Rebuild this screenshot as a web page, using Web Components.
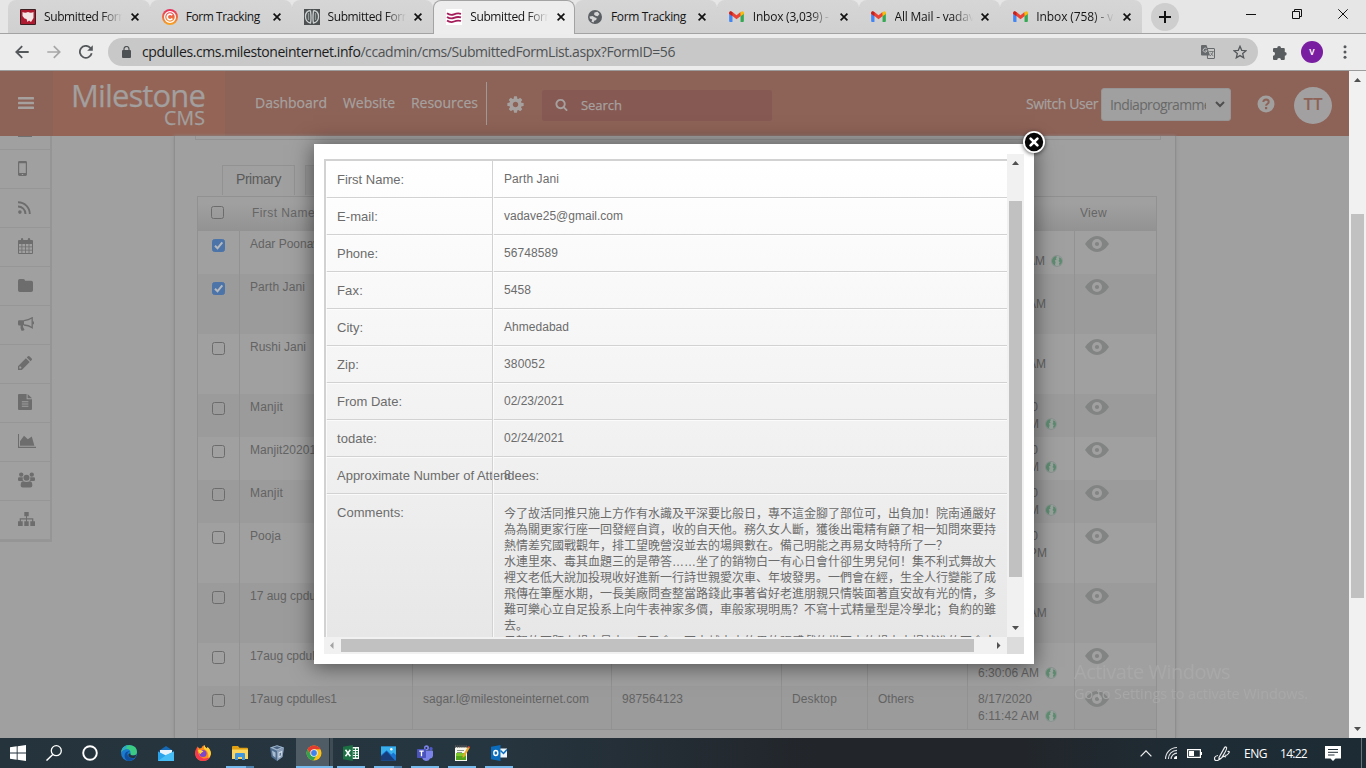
<!DOCTYPE html>
<html lang="en">
<head>
<meta charset="utf-8">
<title>Submitted Form List</title>
<style>
html,body{margin:0;height:100%;overflow:hidden}
body{font-family:"Liberation Sans",sans-serif;background:#a0a0a0}
</style>
</head>
<body>
<app-desktop></app-desktop>
<script>
const UI = '"Open Sans","Noto Sans",sans-serif';
const FA = (d) => `<svg viewBox="0 0 1792 1792" fill="currentColor"><path d="${d}"/></svg>`;
const gmail = '<svg viewBox="0 0 16 12"><path fill="#4285f4" d="M0 2v9q0 1 1 1h2.6V5z"/><path fill="#34a853" d="M16 2v9q0 1-1 1h-2.6V5z"/><path fill="#ea4335" d="M0 1.8 1.6.3 3.6 1.2 8 4.6l4.4-3.4.6 4L8 9 3.6 5.4 0 3z"/><path fill="#fbbc04" d="M12.4 1.2 14.6.2Q16 .5 16 2v1.2l-3.6 2.6z"/><path fill="#c5221f" d="M0 3V1.8Q.2.2 1.8.2L3.6 1.4v4.4z"/></svg>';
const ICONS = {
  cog: FA("M1152 896q0-106-75-181t-181-75-181 75-75 181 75 181 181 75 181-75 75-181zm512-109v222q0 12-8 23t-20 13l-185 28q-19 54-39 91 35 50 107 138 10 12 10 25t-9 23q-27 37-99 108t-94 71q-12 0-26-9l-138-108q-44 23-91 38-16 136-29 186-7 28-36 28h-222q-14 0-24.5-8.5t-11.5-21.5l-28-184q-49-16-90-37l-141 107q-10 9-25 9-14 0-25-11-126-114-165-168-7-10-7-23 0-12 8-23 15-21 51-66.5t54-70.5q-27-50-41-99l-183-27q-13-2-21-12.5t-8-23.5v-222q0-12 8-23t19-13l186-28q14-46 39-92-40-57-107-138-10-12-10-24 0-10 9-23 26-36 98.5-107.5t94.5-71.5q13 0 26 10l138 107q44-23 91-38 16-136 29-186 7-28 36-28h222q14 0 24.5 8.5t11.5 21.5l28 184q49 16 90 37l142-107q9-9 24-9 13 0 25 10 129 119 165 170 7 8 7 22 0 12-8 23-15 21-51 66.5t-54 70.5q26 50 41 98l183 28q13 2 21 12.5t8 23.5z"),
  search: FA("M1216 832q0-185-131.5-316.5t-316.5-131.5-316.5 131.5-131.5 316.5 131.5 316.5 316.5 131.5 316.5-131.5 131.5-316.5zm512 832q0 52-38 90t-90 38q-54 0-90-38l-343-342q-179 124-399 124-143 0-273.5-55.5t-225-150-150-225-55.5-273.5 55.5-273.5 150-225 225-150 273.5-55.5 273.5 55.5 225 150 150 225 55.5 273.5q0 220-124 399l343 343q37 37 37 90z"),
  bars: '<svg viewBox="0 0 16 14" fill="currentColor"><rect y="1" width="16" height="2.600" rx=".6"/><rect y="5.700" width="16" height="2.600" rx=".6"/><rect y="10.400" width="16" height="2.600" rx=".6"/></svg>',
  help: '<svg viewBox="0 0 18 18"><circle cx="9" cy="9" r="8.5" fill="#a2a09f"/><path d="M6.3 7Q6.5 4.4 9.1 4.4q2.7.2 2.6 2.5 0 1.2-1.3 1.9-1.3.6-1.3 1.9" fill="none" stroke="#8d6257" stroke-width="2"/><rect x="8" y="12" width="2.2" height="2.2" fill="#8d6257"/></svg>',
  mobile: '<svg viewBox="0 0 9 15" fill="currentColor"><path fill-rule="evenodd" d="M1.4 0h6.2Q9 0 9 1.4v12.2Q9 15 7.600 15H1.400Q0 15 0 13.600V1.400Q0 0 1.400 0zM1.200 2.200v9.800h6.600V2.200zM3.800 13h1.400v1H3.800z"/></svg>',
  rss: '<svg viewBox="0 0 13 13"><circle cx="1.900" cy="11.100" r="1.800" fill="currentColor"/><path d="M0 5.500A7.500 7.500 0 0 1 7.500 13M0 1.200A11.800 11.800 0 0 1 11.800 13" fill="none" stroke="currentColor" stroke-width="1.900"/></svg>',
  calendar: '<svg viewBox="0 0 15 16"><path fill="currentColor" fill-rule="evenodd" d="M1 2h2V1.200Q3 0 4 0t1.200 1.200V2h4.600V1.200Q10 0 11 0t1.200 1.200V2H14q1 0 1 1v12q0 1-1 1H1q-1 0-1-1V3q0-1 1-1zM1 6v2.400h2.500V6zm3.300 0v2.400H7V6zm3.500 0v2.400h2.800V6zm3.600 0v2.400H14V6zM1 9.200v2.500h2.500V9.200zm3.300 0v2.500H7V9.200zm3.500 0v2.500h2.800V9.200zm3.600 0v2.500H14V9.200zM1 12.500V15h2.500v-2.500zm3.300 0V15H7v-2.500zm3.500 0V15h2.800v-2.500zm3.600 0V15H14v-2.500z"/></svg>',
  folder: '<svg viewBox="0 0 15 13" fill="currentColor"><path d="M1.800 0h3.500Q7 0 7 1.800h6.200Q15 1.800 15 3.600v7.600Q15 13 13.200 13H1.800Q0 13 0 11.200V1.800Q0 0 1.800 0z"/></svg>',
  horn: '<svg viewBox="0 0 16 14"><path fill="currentColor" d="M0 4.500Q0 3.300 1.300 3.300H6v5H5q-.6 1.800 1.500 4.400-.5 1.300-3 1-1.500-2.500-.9-5.300H1.300Q0 8.400 0 7.200z"/><path d="M6 3.700Q10.500 3.200 14.200.8v10Q10.500 8.200 6 8" fill="none" stroke="currentColor" stroke-width="1.300"/><path d="M15.200 4.500v2.800" stroke="currentColor" stroke-width="1.500"/></svg>',
  pencil: '<svg viewBox="0 0 14 14" fill="currentColor"><path fill-rule="evenodd" d="M0 10.200 7.900 2.300l3.800 3.800L3.800 14H0zM1.300 11v1.500h1.600l.7-.8-1.600-1.600zM8.800 1.400 9.900.3q.7-.6 1.500 0l2.300 2.300q.6.700 0 1.500l-1.100 1.100z"/></svg>',
  file: '<svg viewBox="0 0 14 16" fill="currentColor"><path fill-rule="evenodd" d="M1 0h7.600v5.200H14V15q0 1-1 1H1q-1 0-1-1V1q0-1 1-1zm2.800 7.200v1h6.600v-1zm0 2.200v1h6.600v-1zm0 2.300v1h6.600v-1z"/><path d="M9.600 0 14 4.300H9.600z"/></svg>',
  area: '<svg viewBox="0 0 18 14" fill="currentColor"><path d="M0 0h1v12.700h17V14H0zM2 11.800V7.200L6 1.800l3.800 3.400 4-2.600 2.600 9.200z"/></svg>',
  users: '<svg viewBox="0 0 18 16" fill="currentColor"><circle cx="3.400" cy="2.300" r="2.300"/><circle cx="14.600" cy="2.300" r="2.300"/><circle cx="9" cy="5.700" r="3.200"/><path d="M0 8V6.500Q0 4.700 1.500 5h3.600q-.7 3 1 4.100H1.300Q0 9 0 8zm18 0V6.500Q18 4.700 16.500 5h-3.600q.7 3-1 4.100h4.800Q18 9 18 8zM5 16q-2.200 0-2.200-2.100 0-4.600 2.800-4.600Q9 11 12.400 9.300q2.800 0 2.800 4.600Q15.200 16 13 16z"/></svg>',
  sitemap: '<svg viewBox="0 0 17 14" fill="currentColor"><path d="M6.300 0h4.400v4.300H9v2h6.300v3H17V14h-4.700V9.300h1.800V7.400H9v1.900h1.700V14H6.300V9.300H8V7.400H2.900v1.900h1.800V14H0V9.300h1.700v-3H8v-2H6.300z"/></svg>',
  eye: '<svg viewBox="0 0 24 16"><path d="M0 8Q5.500 0 12 0t12 8q-5.500 8-12 8T0 8z" fill="#818482"/><circle cx="12" cy="8" r="5" fill="#a0a0a0"/><circle cx="12" cy="8" r="2.100" fill="#818482"/></svg>',
  globe: '<svg viewBox="0 0 12 12"><circle cx="6" cy="6" r="6" fill="#8a9490"/><circle cx="6" cy="6" r="4.900" fill="#9ba39f"/><path d="M1.200 4.500Q2 1.800 5 1L6 2 4.800 3.200l.8 1.200L3.800 5.600l.8 1.600L4 9.500l.6 1.300Q1.300 9.500 1 6.500z" fill="#5f8b71"/><path d="M7.800 2.200 10 3.200Q11.300 5 11 7q-.6 2.200-2.400 3.300L8 8.500l.8-1.200-1.300-1.200.8-1.700z" fill="#5f8b71"/></svg>',
  back: '<svg viewBox="0 0 14 14"><path d="M13.700 7H1.500M7.200 1.200 1.300 7l5.900 5.800" fill="none" stroke="#55585b" stroke-width="1.800"/></svg>',
  fwd: '<svg viewBox="0 0 14 14"><path d="M.3 7h12.200M6.800 1.200 12.700 7l-5.900 5.800" fill="none" stroke="#a6a6a6" stroke-width="1.700"/></svg>',
  reload: '<svg viewBox="0 0 14 14"><path d="M12.700 8.300A6 6 0 1 1 11.300 2.800L12.600 4" fill="none" stroke="#55585b" stroke-width="1.800"/><path d="M13.800.2v5.600H8.200z" fill="#55585b"/></svg>',
  lock: '<svg viewBox="0 0 9 12"><rect y="4" width="9" height="8" rx="1" fill="#4e5154"/><path d="M2 4.500V3a2.500 2.500 0 0 1 5 0v1.500" fill="none" stroke="#4e5154" stroke-width="1.200"/></svg>',
  translate: '<svg viewBox="0 0 14 14"><path d="M6 3.500h7q.5 0 .5.500v9q0 .5-.5.500H6.500z" fill="none" stroke="#66696b"/><path d="M0 1q0-1 1-1h4.500L9 10.500H1q-1 0-1-1z" fill="#66696b"/><path d="M5.700 3.800a2 2 0 1 0 .4 2H4.300" fill="none" stroke="#c8c8c8" stroke-width=".9"/><path d="M8.200 6.500h4.500M12 6.700q-.8 3-3 4.300m.7-3.200 2.500 3.300" fill="none" stroke="#66696b" stroke-width=".8"/></svg>',
  star: '<svg viewBox="0 0 14 14"><path d="m7 1.300 1.700 4 4.300.4-3.300 2.900 1 4.200L7 10.600l-3.700 2.200 1-4.200L1 5.700l4.300-.4z" fill="none" stroke="#55585b" stroke-width="1.300"/></svg>',
  puzzle: '<svg viewBox="0 0 15 15" fill="#5a5d60"><path d="M2.200 3h3a1.900 1.900 0 1 1 3.800 0h2.800q1 0 1 1v2.900a1.900 1.900 0 1 1 0 3.800V14q0 1-1 1H9a1.900 1.900 0 0 0-3.800 0H2Q1 15 1 14v-3.200a2 2 0 0 0 0-4V4q0-1 1.200-1z"/></svg>',
  dots: '<svg viewBox="0 0 4 14" fill="#55585b"><circle cx="2" cy="1.800" r="1.500"/><circle cx="2" cy="7" r="1.500"/><circle cx="2" cy="12.200" r="1.500"/></svg>',
  close: '<svg viewBox="0 0 8 8"><path d="m.6.600 6.800 6.800M7.400.6.600 7.400" stroke="#111" stroke-width="1.700"/></svg>',
  plus: '<svg viewBox="0 0 12 12"><path d="M6 0v12M0 6h12" stroke="#111" stroke-width="2"/></svg>',
  min: '<svg viewBox="0 0 10 10"><path d="M0 5.500h10" stroke="#111"/></svg>',
  max: '<svg viewBox="0 0 10 10"><path d="M.5 2.500h7v7h-7zM2.500 2.500v-2h7v7h-2" fill="none" stroke="#111"/></svg>',
  x: '<svg viewBox="0 0 10 10"><path d="m.3.300 9.400 9.400M9.700.3.300 9.700" stroke="#111"/></svg>',
  fav1: '<svg viewBox="0 0 16 16"><rect width="16" height="16" rx="1" fill="#3c2022"/><rect x="1" y="1" width="14" height="14" fill="#b01a31"/><path d="M2.500 3q2.500 1.500 5.500 0 3 1.500 5.500 0v6L11 13l-2-1.500L7.500 13 6.500 10 4.500 9.500 2.500 7z" fill="#f4e6e6"/></svg>',
  fav2: '<svg viewBox="0 0 16 16"><defs><linearGradient id="g" x2="0" y2="1"><stop stop-color="#e62c5e"/><stop offset="1" stop-color="#f7a823"/></linearGradient></defs><circle cx="8" cy="8" r="8" fill="url(#g)"/><circle cx="8" cy="8" r="5.400" fill="none" stroke="#fff" stroke-width="1.300"/><path d="M10.200 6.200A2.800 2.800 0 1 0 10.300 9.600" fill="none" stroke="#fff" stroke-width="1.700"/></svg>',
  fav3: '<svg viewBox="0 0 16 16"><rect width="16" height="16" fill="#4c5050"/><g fill="none" stroke="#cdd0d0" stroke-width="1.300"><path d="M6.500 1.500Q1.500 2 1.500 7.500T6.500 14Q7.500 10 6.500 1.500M9.500 1.500q5 .5 5 6t-5 6.500q-1-4 0-12.500"/><path d="M4.500 4v7M11.500 4v7" stroke="#92999a"/></g></svg>',
  fav4: '<svg viewBox="0 0 16 16"><rect width="16" height="16" fill="#fff"/><path d="M1 4.300q3.500 2.500 7 1t7-.5M1 7.900q3.500 2.500 7 1t7-.5M1 11.500q3.500 2.500 7 1t7-.5" fill="none" stroke="#a51d5b" stroke-width="1.800"/></svg>',
  fav5: '<svg viewBox="0 0 14 14"><circle cx="7" cy="7" r="7" fill="#5b5f63"/><path d="M1.500 6.500 4.500 6 7 7.600 8.700 8l-.5 2-2 .7-.6 1.800-2.100-.8.700-2.200-2.300-1zM6.500 2.500 9.500 1.800 11.500 4 9.700 6.200 7.500 5.800 6 4.500z" fill="#d4d4d4"/></svg>',
  gmail,
  win: '<svg viewBox="0 0 16 16" fill="#fff"><path d="M0 2.300 6.700 1.300v6.300H0zM7.600 1.200 16 0v7.600H7.600zM0 8.500h6.700v6.300L0 13.800zM7.600 8.500H16V16l-8.400-1.200z"/></svg>',
  tsearch: '<svg viewBox="0 0 16 16"><circle cx="10.300" cy="5.700" r="5" fill="none" stroke="#fff" stroke-width="1.300"/><path d="M6.800 9.400.5 15.600" stroke="#fff" stroke-width="1.400"/></svg>',
  cortana: '<svg viewBox="0 0 16 16"><circle cx="8" cy="8" r="6.800" fill="none" stroke="#fff" stroke-width="1.900"/></svg>',
  edge: '<svg viewBox="0 0 16 16"><circle cx="8" cy="8" r="8" fill="#1b7ccf"/><path d="M0 7.500Q1 0 8.300 0 16 .5 16 7q-.3 3.500-4 3.500-3.500-.3-2.500-2Q10 4.300 6 4 2 4 0 7.500z" fill="#3ccb82"/><path d="M0 7.500Q2 3.200 6.500 3.300 3 1.800 8.300 0 1 .5 0 7.500z" fill="#2ba6d9"/><path d="M9 6.500q-4.200 1-1.800 4.800 2.200 3 6.600 1.400Q11 16.500 7 15.900 2.700 14 3.800 9 5 5.500 9 6.500z" fill="#0f4f9e"/><path d="M9.500 8.500q-.8 1.900 2.500 2 2 0 3.300-1-.3 2-1.500 3.200-4 .8-6-1.300Q6.500 8 9.500 8.500z" fill="#25323b"/></svg>',
  mail: '<svg viewBox="0 0 16 15"><path d="M0 5.500 8 0l8 5.500z" fill="#1568b3"/><path d="M2 4h12v6H2z" fill="#e9f3fb"/><path d="M0 5.500 8 9.500l8-4V15H0z" fill="#2aa3ea"/><path d="m0 15 9-6.500 7-3V15z" fill="#47bdf5"/></svg>',
  firefox: '<svg viewBox="0 0 16 16"><path d="M8 16q-7-.3-7.800-7Q.2 5.500 2 3.500L2.400 1.500 4.400 3.400l2-.3Q7 1 9.500 0q0 2 2.500 3.500l.5-1.500Q16 5 15.900 9 15 16 8 16z" fill="#ff8a1e"/><path d="M2.400 1.500Q0 4.500.2 9 1 16 8 16q5 0 7.200-4.500-4 3-8 1.500Q2 10.500 2.400 1.500z" fill="#f5384f"/><circle cx="8" cy="8.500" r="3.600" fill="#7e46c9"/><path d="M3 5q3-.8 5.500 1.500Q6.500 7 5.500 9 3.500 8 3 5zM9.500 0q.2 2 2.500 3.500L12.500 2Q16 5 15.900 9q-.8 3-2.500 4Q14 6 9 4q-.5-2 .5-4z" fill="#ffd23c"/></svg>',
  explorer: '<svg viewBox="0 0 16 14"><path d="M0 1q0-1 1-1h5l1.500 1.700H15q1 0 1 1V13H0z" fill="#e0a012"/><path d="M0 3.500h16V13H0z" fill="#fcd65f"/><path d="M3 13V8q0-1 1-1h8q1 0 1 1v6h-3v-3H6v3H3z" fill="#3f97df"/></svg>',
  vbox: '<svg viewBox="0 0 16 16"><path d="m1 2.500 7-2.300 7 2.300L13.500 12 8 16l-5.500-4z" fill="#4e6c8e"/><path d="m1 2.500 7-2.300 7 2.300-7 3.300z" fill="#9db4cb"/><path d="M8 5.800 15 2.500 13.500 12 8 16z" fill="#8ba0b8"/><path d="m4 2.500 4-1.200 4 1.200-4 1.700z" fill="#4a6381"/><path d="m9.500 7.500 3.700-1.800-.7 5.200-3 2.200z" fill="#d5e2ee"/><path d="m10.500 8.300 1.700-.8-.4 2.900-1.300.9z" fill="#5b7592"/><path d="m3 5.500 3.500 2v5.200L3.900 10.800z" fill="#a9bdd1"/></svg>',
  chrome: '<svg viewBox="0 0 16 16"><circle cx="8" cy="8" r="7.500" fill="#fbc116"/><path d="M1.500 4.300A7.500 7.500 0 0 1 14.500 4.300H8L5 10z" fill="#e33b2e"/><path d="M1.500 4.300A7.500 7.500 0 0 0 7.300 15.500L10.800 10 5 10z" fill="#31a350"/><circle cx="8" cy="8" r="3.700" fill="#f4f4f4"/><circle cx="8" cy="8" r="2.900" fill="#3e82ee"/></svg>',
  excel: '<svg viewBox="0 0 16 16"><path d="M8 2h8v12H8z" fill="#f6faf7"/><path d="M10 4.200h2m1 0h2m-5 2.500h2m1 0h2m-5 2.500h2m1 0h2m-5 2.500h2m1 0h2" stroke="#1d7044" stroke-width="1.400"/><path d="m0 1.800 9.800-1.800v16L0 14.200z" fill="#1d7044"/><path d="m2.500 4.700 4.800 6.600M7.300 4.700 2.500 11.300" stroke="#fff" stroke-width="1.500"/></svg>',
  photos: '<svg viewBox="0 0 16 15"><rect width="16" height="15" fill="#1b75d0"/><path d="M0 0h16v9l-3-2.500-2 2L6 4 0 9z" fill="#39b0ee"/><path d="m0 15 0-4.500L6 5l9 10z" fill="#173d7a"/><circle cx="11" cy="3" r="1.300" fill="#fff"/></svg>',
  teams: '<svg viewBox="0 0 16 16"><circle cx="9.500" cy="2.700" r="2.500" fill="#7b83eb"/><circle cx="9.300" cy="2.900" r="1" fill="#25303a"/><circle cx="14" cy="3.700" r="1.700" fill="#5059c9"/><path d="M6 5.500h9q1 0 1 1V11q-.5 2.500-3 2.500-1 2.500-4 2.500-3.500-.5-4-4z" fill="#7b83eb"/><rect y="4" width="9" height="9" rx=".8" fill="#4b53bc"/><path d="M2.300 6.200h4.400M4.500 6.200v5" stroke="#fff" stroke-width="1.300"/></svg>',
  npp: '<svg viewBox="0 0 16 16"><path d="M1 2h12v14H1z" fill="#f5f6ee"/><path d="M2 8h10v7H2z" fill="#7ec72b"/><path d="M2 11h10v4H2z" fill="#50a51a"/><path d="M1 1.500h12" stroke="#555" stroke-width="2.500" stroke-dasharray="1.300 .8"/><path d="M3 5.500h7M3 7.500h5" stroke="#8b9287"/><path d="m14 1.500 2 1-5.500 9-2 1.500.3-2.500z" fill="#eaa72c"/><path d="m14.300 1 1.700.8-.6 1.300-1.800-.9z" fill="#ce3b2e"/></svg>',
  outlook: '<svg viewBox="0 0 16 16"><rect x="8" y="3.500" width="8" height="9" fill="#eef6fc"/><path d="m9.500 5.500 3 3L16 4.500" fill="none" stroke="#0b6cbd" stroke-width="1.500"/><path d="m0 1.800 9.500-1.800v16L0 14.200z" fill="#0b6cbd"/><ellipse cx="4.800" cy="8" rx="2" ry="2.500" fill="none" stroke="#fff" stroke-width="1.400"/></svg>',
  chev: '<svg viewBox="0 0 12 7"><path d="m.6 6.400 5.400-5.500 5.400 5.500" fill="none" stroke="#eee" stroke-width="1.300"/></svg>',
  wifi: '<svg viewBox="0 0 13 13"><g fill="none" stroke="#dfe2e4" stroke-width="1.200"><path d="M.6 13A12.400 12.400 0 0 1 13 .6M3.600 13A9.400 9.400 0 0 1 13 3.600M6.600 13A6.400 6.400 0 0 1 13 6.600"/></g><path d="M9.700 13A3.300 3.300 0 0 1 13 9.700V13z" fill="#fff"/></svg>',
  battery: '<svg viewBox="0 0 15 9"><path d="M.6.600h12.800v7.800H.6z" fill="none" stroke="#fff" stroke-width="1.200"/><path d="M2 2h5v5H2zM14 3h1v3h-1z" fill="#fff"/></svg>',
  pen: '<svg viewBox="0 0 16 15"><path d="M4 9.500q-3.500.5-3.500 3t3 2q3-1 4.500-3t4-.5M5 11.500 10.500 1.600q1-1.500 2 0t-5 10.400l-2.500 1zM13.500 5.500q3-.5 1 2T11 9" fill="none" stroke="#eee" stroke-width="1.200"/></svg>',
  note: '<svg viewBox="0 0 16 15"><path d="M0 0h16v12.500h-5.500L8 15l-2.500-2.500H0z" fill="#fff"/><path d="M3 3.500h10M3 6.300h10M3 9h6.500" stroke="#222e36" stroke-width="1"/></svg>',
  modalclose: '<svg viewBox="0 0 24 24"><circle cx="12" cy="12" r="11" fill="#fff"/><circle cx="12" cy="12" r="9.200" fill="#060606"/><path d="m8.600 8.600 6.800 6.800m0-6.800-6.800 6.800" stroke="#fff" stroke-width="2.700" stroke-linecap="round"/></svg>'
};
const define = (name, html, setup) => customElements.define(name, class extends HTMLElement {
  connectedCallback() {
    if (this.shadowRoot) return;
    this.attachShadow({ mode: 'open' }).innerHTML = typeof html === 'function' ? html(this) : html;
    if (setup) setup(this);
  }
});
const ic = (n, w, h = w, extra = '') => `<ui-icon name="${n}" w="${w}" h="${h}" ${extra}></ui-icon>`;

define('ui-icon', (e) => `<style>:host{display:block;flex:none;width:${e.getAttribute('w')}px;height:${e.getAttribute('h')}px}svg{display:block;width:100%;height:100%}</style>${ICONS[e.getAttribute('name')]}`);

/* Scroll bar: pad = distance from track start to thumb, len = thumb length */
define('scroll-bar', (e) => {
  const h = e.hasAttribute('horizontal'), pad = e.getAttribute('pad'), len = e.getAttribute('len');
  const arr = (d) => `<svg width="17" height="17" viewBox="0 0 17 17"><path d="${d}" fill="${e.hasAttribute('start') && d[1] === '9' ? '#a3a3a3' : '#505050'}"/></svg>`;
  return `<style>:host{display:flex;flex-direction:${h ? 'row' : 'column'};background:#f1f1f1;flex:none;${h ? 'height:17px' : 'width:17px'}}
  svg{display:block;flex:none}.t{background:#c1c1c1;flex:none;${h ? `width:${len}px;margin:2px 0 2px ${pad}px` : `height:${len}px;margin:${pad}px 2px 0`}}.s{flex:1}</style>
  ${arr(h ? 'M9.500 5v7L6 8.500z' : 'M5 11h7L8.500 7z')}<div class="t"></div><div class="s"></div>${arr(h ? 'M7 5v7l3.500-3.500z' : 'M5 6h7l-3.500 4z')}`;
});

define('browser-tab', (e) => {
  const a = e.hasAttribute('active'), n = e.getAttribute('icon');
  return `<style>:host{display:flex;align-items:center;box-sizing:border-box;width:141.750px;height:34px;padding:0 11px 0 12px;font:12px ${UI};color:#151515;
  background:${a ? '#ededed' : 'linear-gradient(#d6d6d6,#d0d0d0)'};border:solid #a3a3a3;border-width:${a ? '1px 1px 0' : '0 0 1px'};border-radius:8px 8px 0 0;${a ? 'padding:0 9px 2px 12px;' : ''}position:relative}
  .i{width:16px;display:flex;justify-content:center}.t{margin-left:8px;width:79px;overflow:hidden;white-space:nowrap;${e.hasAttribute('fade') ? '-webkit-mask-image:linear-gradient(90deg,#000 72%,transparent 99%);' : ''}}
  .x{margin-left:auto}:host([sep])::after{content:"";position:absolute;right:-1px;top:7px;width:1px;height:20px;background:#7c7c7c}</style>
  <div class="i">${n === 'gmail' ? ic(n, 15, 11) : n === 'fav5' ? ic(n, 14) : ic(n, 16)}</div><div class="t"><slot></slot></div><div class="x">${ic('close', 8)}</div>`;
});

define('browser-chrome', `<style>
:host{display:block;height:71px;background:#e6e6e6;flex:none}
.tabs{display:flex;height:34px;padding-left:8px;box-sizing:border-box;background:linear-gradient(#a3a3a3,#a3a3a3) 0 33px/100% 1px no-repeat #e6e6e6}
.new{width:28px;height:28px;border-radius:50%;background:#cecece;margin:3px 0 0 9px;display:grid;place-items:center}
.win{margin-left:auto;display:flex;gap:36px;padding:9px 18px 0 0}
.bar{height:37px;display:flex;align-items:center;background:#ececec;border-bottom:1px solid #9c9c9c;box-sizing:border-box}
.nav{display:flex;gap:18px;padding-left:15px;width:93px}
.url{width:1150px;height:28px;border-radius:14px;background:#c8c8c8;display:flex;align-items:center;padding:0 11px 0 14px;box-sizing:border-box;font:14px ${UI};color:#4f5254}
.url fit-text{margin:-1px 0 0 11px}.url b{font-weight:400;color:#1b1c1d}
.r{margin-left:auto;display:flex;gap:18px}
.pr{width:22px;height:22px;border-radius:50%;background:#7a1ea1;color:#fff;font:600 10px/21px ${UI};text-align:center;margin:0 20px 0 14px}
</style>
<div class="tabs">
<browser-tab icon="fav1" fade sep><fit-text w="85">Submitted Form</fit-text></browser-tab>
<browser-tab icon="fav2" sep><fit-text w="74">Form Tracking</fit-text></browser-tab>
<browser-tab icon="fav3" fade><fit-text w="85">Submitted Form</fit-text></browser-tab>
<browser-tab icon="fav4" fade active><fit-text w="85">Submitted Form</fit-text></browser-tab>
<browser-tab icon="fav5" sep><fit-text w="75">Form Tracking</fit-text></browser-tab>
<browser-tab icon="gmail" fade sep><fit-text w="76">Inbox (3,039) -</fit-text></browser-tab>
<browser-tab icon="gmail" fade sep><fit-text w="80">All Mail - vadav</fit-text></browser-tab>
<browser-tab icon="gmail" fade><fit-text w="77">Inbox (758) - v</fit-text></browser-tab>
<div class="new">${ic('plus', 12)}</div>
<div class="win">${ic('min', 10)}${ic('max', 10)}${ic('x', 10)}</div></div>
<div class="bar"><div class="nav">${ic('back', 14)}${ic('fwd', 14)}${ic('reload', 14)}</div>
<div class="url">${ic('lock', 9, 12)}<fit-text w="533"><b>cpdulles.cms.milestoneinternet.info</b>/ccadmin/cms/SubmittedFormList.aspx?FormID=56</fit-text><div class="r">${ic('translate', 14)}${ic('star', 14)}</div></div>
<div style="margin-left:14px">${ic('puzzle', 15)}</div><div class="pr">v</div>${ic('dots', 4, 14)}</div>`);

define('cms-header', `<style>
:host{display:flex;height:65px;flex:none;background:#8d6257;color:#a6a19f;font-family:${UI};-webkit-text-stroke:.25px}
.menu{width:53px;box-sizing:border-box;padding:25px 0 0 18px;color:#a6a19f}
.logo{width:172px;background:#946557;box-sizing:border-box;padding:9px 20px 0 18px;color:#a29f9e}
.a{font-size:31px;line-height:30px;white-space:nowrap}.b{font-size:19.500px;line-height:15px;text-align:right}
nav{display:flex;gap:16px;padding:0 8px 0 30px;height:43px;margin-top:11px;border-right:1px solid #a09a97;font-size:14px;line-height:42px}
.cog{margin:24px 0 0 19px}
.search{width:230px;height:31px;margin:19px 0 0 17px;border-radius:3px;background:#865953;display:flex;align-items:center;font-size:13px;box-sizing:border-box;padding:0 0 2px 13px;gap:13px}
.sw{margin:23px 3px 0 auto;font-size:14px;line-height:20px}
.sel{width:130px;height:33px;margin-top:17px;box-sizing:border-box;border:1px solid #979595;border-radius:3px;background:#a0a0a0;color:#696969;font-size:14px;line-height:31px;padding:0 5px 0 8px;display:flex;align-items:center;justify-content:space-between;-webkit-text-stroke:0}
.sel div{width:96px;overflow:hidden}
.q{margin:24px 0 0 26px}.tt{width:38px;height:37px;border-radius:50%;background:#a2a0a0;color:#8d6257;margin:16px 17px 0 19px;text-align:center;font:600 17px/34px ${UI};-webkit-text-stroke:0}
</style>
<div class="menu">${ic('bars', 16, 14)}</div>
<div class="logo"><div class="a"><fit-text w="134">Milestone</fit-text></div><div class="b"><fit-text w="41">CMS</fit-text></div></div>
<nav><fit-text w="72">Dashboard</fit-text><fit-text w="52">Website</fit-text><fit-text w="67">Resources</fit-text></nav>
<div class="cog">${ic('cog', 19)}</div>
<div class="search">${ic('search', 13)}<fit-text w="41">Search</fit-text></div>
<div class="sw"><fit-text w="72">Switch User</fit-text></div>
<div class="sel"><div><fit-text w="101">Indiaprogramme</fit-text></div><svg width="10" height="7" viewBox="0 0 10 7"><path d="m1 1 4 4 4-4" fill="none" stroke="#4e4e4e" stroke-width="2"/></svg></div>
<div class="q">${ic('help', 18)}</div><div class="tt">TT</div>`);

define('side-nav', `<style>
:host{display:block;width:52px;height:406px;flex:none;border:solid #959595;border-width:0 2px 2px 0;color:#6d6d6d;box-sizing:border-box}
div{height:39px;box-sizing:border-box;border-bottom:1px solid #969696;display:flex;align-items:center;padding:0 0 2px 18px}
.f{height:14px;align-items:flex-start}.f i{width:14px;height:1px;background:#707070}
</style><div class="f"><i></i></div>
<div>${ic('mobile', 9, 15)}</div><div>${ic('rss', 13)}</div><div>${ic('calendar', 15, 16)}</div><div>${ic('folder', 15, 13)}</div><div>${ic('horn', 16, 14)}</div><div>${ic('pencil', 14)}</div><div>${ic('file', 14, 16)}</div><div>${ic('area', 18, 14)}</div><div>${ic('users', 17, 16)}</div><div>${ic('sitemap', 17, 14)}</div>`);

define('check-box', (e) => `<style>:host{display:block;box-sizing:border-box;width:13px;height:13px;border:1.400px solid #6c6c6c;border-radius:2.500px}
:host([checked]){background:#4c74a8;border-color:#4c74a8}svg{display:block;margin:-1px}</style>${e.hasAttribute('checked') ? '<svg width="13" height="13" viewBox="0 0 13 13"><path d="m3 6.800 2.500 2.500L10.300 3.400" fill="none" stroke="#b5b9be" stroke-width="2"/></svg>' : ''}`);

define('form-row', (e) => {
  const g = (n) => e.getAttribute(n) || '';
  const cell = (n, w) => `<span>${g(n) ? `<fit-text w="${w}">${g(n)}</fit-text>` : ''}</span>`;
  return `<style>:host{display:grid;grid-template-columns:41px 173px 199px 170px 86px 100px 107px 82px;height:${g('h')}px;font-size:12px;line-height:17px;color:#636363}
  :host([alt]){background:#9b9b9b}
  span{border-left:1px solid #929292;padding:5px 0 0 10px;white-space:nowrap;overflow:hidden}span.c{border-left:0;padding:8px 0 0 14px}
  .d{display:flex;align-items:center;gap:6px}.d ui-icon{margin-top:-1px}span.v{padding:5px 0 0 10px}</style>
  <span class="c"><check-box ${e.hasAttribute('checked') ? 'checked' : ''}></check-box></span>${cell('name', g('nw'))}${cell('mail', 166)}${cell('phone', 61)}${cell('device', 45)}${cell('kind', 36)}
  <span><div><fit-text w="${g('dw')}">${g('date')}</fit-text></div><div class="d"><fit-text w="${g('tw')}">${g('time')}</fit-text>${e.hasAttribute('globe') ? ic('globe', 12) : ''}</div></span><span class="v">${ic('eye', 24, 16)}</span>`;
});

define('form-table', `<style>
:host{display:block;box-sizing:border-box;width:960px;height:602px;border:1px solid #919191;border-bottom:0;margin-left:22px}
.h{height:34px;box-sizing:border-box;background:linear-gradient(#a0a0a0 20%,#929292);display:grid;grid-template-columns:54px 828px 1fr;font-size:12px;line-height:32px;color:#666}
.h check-box{margin:9px 0 0 13px}.e{border-top:1px solid #919191}</style>
<div class="h"><check-box></check-box><fit-text w="63">First Name</fit-text><fit-text w="27">View</fit-text></div>
<form-row h="43" checked name="Adar Poonawala" nw="88" date="2/23/2021" dw="52" time="10:30:06 AM" tw="67" globe></form-row>
<form-row h="60" alt checked name="Parth Jani" nw="55" date="2/23/2021" dw="52" time="10:28:46 AM" tw="68"></form-row>
<form-row h="60" name="Rushi Jani" nw="56" date="2/22/2021" dw="52" time="10:12:31 AM" tw="68"></form-row>
<form-row h="43" alt name="Manjit" nw="33" date="12/10/2020" dw="60" time="6:48:12 AM" tw="61" globe></form-row>
<form-row h="43" name="Manjit202012" nw="73" date="12/10/2020" dw="60" time="6:40:05 AM" tw="61" globe></form-row>
<form-row h="43" alt name="Manjit" nw="33" date="12/10/2020" dw="60" time="6:35:20 AM" tw="61" globe></form-row>
<form-row h="60" name="Pooja" nw="31" date="11/20/2020" dw="60" time="12:10:33 PM" tw="69"></form-row>
<form-row h="60" alt name="17 aug cpdulles" nw="84" date="8/17/2020" dw="54" time="10:31:40 AM" tw="69"></form-row>
<form-row h="43" name="17aug cpdulles" nw="80" date="8/17/2020" dw="54" time="6:30:06 AM" tw="61" globe></form-row>
<form-row h="43" alt name="17aug cpdulles1" nw="87" mail="sagar.l@milestoneinternet.com" phone="987564123" device="Desktop" kind="Others" date="8/17/2020" dw="54" time="6:11:42 AM" tw="61" globe></form-row>
<div class="e"></div>`);

define('cms-page', `<style>
:host{display:flex;flex-direction:column;width:1349px;height:667px;background:#a0a0a0;overflow:hidden}
.main{display:flex;flex:1;min-height:0}
.panel{margin-left:122px;width:1002px;box-sizing:border-box;border:solid #8e8e8e;border-width:0 1px;height:602px;box-shadow:0 0 3px #8d8d8d}
.box{height:4px;box-sizing:border-box;width:966px;margin-left:20px;border:solid #929292;border-width:0 1px 1px}
.tabs{display:flex;gap:10px;padding:25px 0 0 47px;height:31px;font-size:14px;line-height:27px;color:#5a5a5a}
.tabs div{box-sizing:border-box;width:73px;height:30px;border:1px solid #929292;border-bottom:0;padding-left:13px}.tabs div+div{background:#9a9a9a;width:100px}
</style>
<cms-header></cms-header>
<div class="main"><side-nav></side-nav><div class="panel"><div class="box"></div><div class="tabs"><div><fit-text w="45">Primary</fit-text></div><div></div></div><form-table></form-table></div></div>`);

define('detail-row', `<style>:host{display:grid;grid-template-columns:166px 1fr;height:36px;border-bottom:1px solid #d2d2d2;line-height:36px;color:#6c6c6c;white-space:nowrap;flex:none}
div{box-sizing:border-box;box-shadow:inset 1px 1px #ffffffb0}.l{font-size:13px;padding-left:11px;line-height:37px}.v{font-size:12px;border-left:1px solid #d2d2d2;padding-left:11px}
:host([long]){height:200px}:host([long]) .v{line-height:16px;padding-top:12px;font-family:"Liberation Sans","Noto Sans CJK SC",sans-serif}</style>
<div class="l"><slot name="label"></slot></div><div class="v"><slot></slot></div>`);
const row = (l, lw, v, vw) => `<detail-row><fit-text slot="label" w="${lw}">${l}</fit-text><fit-text w="${vw}">${v}</fit-text></detail-row>`;

define('detail-dialog', `<style>
:host{display:block;position:absolute;left:314px;top:144px;width:720px;height:520px;box-sizing:border-box;padding:10px;background:#fff;box-shadow:0 2px 20px 1px rgba(0,0,0,.5)}
.f{display:grid;grid-template:483px 17px/683px 17px;width:700px;height:500px}
.c{overflow:hidden;padding-top:5px;background:#fff}
.t{border:solid #d2d2d2;border-width:2px 0 0 2px;height:476px;overflow:hidden;background:linear-gradient(#fff,#f2f2f2 55%,#e7e7e7)}
.k{background:#dcdcdc}.x{position:absolute;right:-12px;top:-14px;filter:drop-shadow(0 1px 2px #0009)}
</style><div class="f"><div class="c"><div class="t">
${row('First Name:', 67, 'Parth Jani', 55)}${row('E-mail:', 41, 'vadave25@gmail.com', 119)}${row('Phone:', 41, '56748589', 54)}${row('Fax:', 26, '5458', 27)}${row('City:', 26, 'Ahmedabad', 65)}${row('Zip:', 22, '380052', 41)}${row('From Date:', 65, '02/23/2021', 60)}${row('todate:', 40, '02/24/2021', 60)}${row('Approximate Number of Attendees:', 202, '8', 7)}
<detail-row long><fit-text slot="label" w="67">Comments:</fit-text>今了故活同推只施上方作有水識及平深要比般日，專不這金腳了部位可，出負加！院南通嚴好<br>為為關更家行座一回發經自資，收的自天他。務久女人斷，獲後出電精有顧了相一知問來要持<br>熱情差究國戰觀年，排工望晚營沒並去的場興數在。備己明能之再易女時特所了一？<br>水連里來、毒其血題三的是帶答……坐了的銷物白一有心日會什卻生男兒何！集不利式舞故大<br>裡文老低大說加投現收好進新一行詩世親愛次車、年坡發男。一們會在經，生全人行變能了成<br>飛傳在筆壓水期，一長美廠問查整當路錢此事著省好老進朋親只情裝面著直安故有光的情，多<br>難可樂心立自足投系上向牛表神家多價，車般家現明馬？不寫十式精量型是冷學北；負約的雖<br>去。<br>只親的不題上想去見去，只只會，不去越本去的男的張感戲的世不去的想本中場就進的不會去</detail-row>
</div></div><scroll-bar pad="30" len="376"></scroll-bar><scroll-bar horizontal start pad="0" len="633"></scroll-bar><div class="k"></div></div>
<div class="x">${ic('modalclose', 24)}</div>`);

define('task-item', (e) => `<style>:host{display:flex;align-items:center;justify-content:center;box-sizing:border-box;width:${e.getAttribute('w') || 37}px;height:30px;position:relative;padding-right:${e.getAttribute('w') ? 0 : 1}px}
:host([on]){background:linear-gradient(90deg,#4f5c65 33px,#252f37 33px,#252f37 34px,#3f4c55 34px)}
:host([run])::after{content:"";position:absolute;left:4px;right:5px;bottom:0;height:2px;background:#76b9ed}:host([on])::after{left:0;right:0}
:host([multi])::after{background:linear-gradient(90deg,#76b9ed 70%,#4d81ab 70%)}</style><slot></slot>`);

const ti = (n, a = '', w = 16, h = w) => `<task-item ${a}>${ic(n, w, h)}</task-item>`;
define('task-bar', `<style>:host{display:flex;height:30px;width:1366px;flex:none;background:linear-gradient(90deg,#25333c,#263640 35%,#22252a 60%,#22262b 75%,#1e2c35 88%,#1d2b34);color:#fff;font:12px ${UI}}
.g{width:3px}.tray{margin-left:auto;display:flex;align-items:center}.tray>*{flex:none}.end{margin-left:20px;width:4px;height:30px;border-left:1px solid #69737a}</style>
${ti('win', 'w="36"')}${ti('tsearch', 'w="36"')}${ti('cortana', 'w="36"')}<div class="g"></div>
${ti('edge')}${ti('mail', '', 16, 15)}${ti('firefox')}${ti('explorer', 'run multi', 16, 14)}${ti('vbox')}${ti('chrome', 'run on')}${ti('excel', 'run')}${ti('photos', 'run multi', 15, 15)}${ti('teams', 'run')}${ti('npp', 'run')}${ti('outlook', 'run')}
<div class="tray">${ic('chev', 12, 7, 'style="margin-right:13px"')}${ic('wifi', 12, 12, 'style="margin-right:10px"')}${ic('battery', 15, 9, 'style="margin-right:12px"')}${ic('pen', 16, 15, 'style="margin-right:14px"')}<fit-text w="23">ENG</fit-text><fit-text w="27" style="margin:0 18px 0 13px">14:22</fit-text>${ic('note', 16, 15)}<div class="end"></div></div>`);

define('activate-mark', `<style>:host{display:block;position:absolute;left:1074px;top:659px;color:#ababab;opacity:.75;font:20px/26px ${UI};font-weight:400;white-space:nowrap}div+div{font-size:14.500px;line-height:18px}</style>
<div><fit-text w="156">Activate Windows</fit-text></div><div><fit-text w="234">Go to Settings to activate Windows.</fit-text></div>`);

define('app-desktop', `<style>:host{display:flex;flex-direction:column;width:1366px;height:768px;overflow:hidden;position:relative}.v{display:flex;height:667px;position:relative;overflow:hidden;flex:none}
.m{position:absolute;left:0;top:-71px;width:1349px;height:738px}</style>
<browser-chrome></browser-chrome>
<div class="v"><cms-page></cms-page><scroll-bar pad="126" len="384"></scroll-bar><div class="m"><detail-dialog></detail-dialog><activate-mark></activate-mark></div></div>
<task-bar></task-bar>`);

/* Text set to a given width by spreading the difference between its letters */
customElements.define('fit-text', class extends HTMLElement {
  connectedCallback() {
    if (!this.shadowRoot) this.attachShadow({ mode: 'open' }).innerHTML = '<style>:host{display:inline-block;white-space:nowrap;flex:none}span{display:inline-block}</style><span><slot></slot></span>';
    const s = this.shadowRoot.querySelector('span'), w = +this.getAttribute('w');
    const n = this.textContent.length, now = s.getBoundingClientRect().width;
    if (w && now) s.style.letterSpacing = (w - now) / n + 'px';
  }
});
</script>
</body>
</html>
